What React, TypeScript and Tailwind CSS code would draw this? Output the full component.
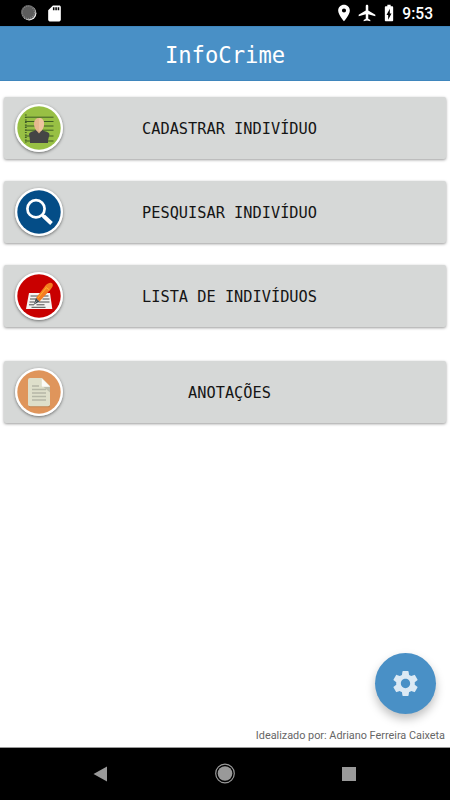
import type { ReactNode } from "react"
import { MdAirplanemodeActive, MdBatteryChargingFull, MdLocationOn, MdSdCard, MdSettings } from "react-icons/md"

interface MenuButtonProps {
  label: string
  color: string
  className?: string
  children: ReactNode
}

function MenuButton({ label, color, className = "", children }: MenuButtonProps) {
  return (
    <button
      className={`flex h-[62px] w-full items-center rounded-[2px] bg-[#d6d8d7] pl-[11px] pr-[50px] shadow-[0_1px_3px_rgba(0,0,0,0.4)] ${className}`}
    >
      <span className="size-12 shrink-0 rounded-full shadow-[0_1px_3px_rgba(0,0,0,0.5)]">
        <svg viewBox="-2.5 -2.5 48 48" className="size-full">
          <circle cx="21.5" cy="21.5" r="24" fill="#fff" />
          <circle cx="21.5" cy="21.5" r="21.7" fill={color} />
          {children}
        </svg>
      </span>
      <span className="flex-1 whitespace-pre pt-0.5 text-center font-['DejaVu_Sans_Mono',monospace] text-[15.3px] leading-5 text-[#151515]">
        {label}
      </span>
    </button>
  )
}

function StatusBar() {
  return (
    <div className="flex h-[26px] items-center bg-black pl-5 pr-[17px] text-white">
      <svg viewBox="0 0 18 18" className="size-[18px]">
        <circle cx="9.2" cy="9.2" r="7.2" fill="#eee" />
        <circle cx="8.3" cy="8.3" r="7.2" fill="#5c5c5c" />
        <circle cx="8.3" cy="8.3" r="6.2" fill="none" stroke="#8d8d8d" strokeWidth="1.2" strokeDasharray="1 1.2" />
      </svg>
      <MdSdCard className="ml-[7px] size-[19px]" />
      <div className="ml-auto flex items-center">
        <MdLocationOn className="size-5" />
        <MdAirplanemodeActive className="ml-[3px] size-5" />
        <MdBatteryChargingFull className="ml-0.5 size-5" />
        <span className="ml-[3px] pt-0.5 font-[Roboto,sans-serif] text-[15.6px] font-medium leading-5">9:53</span>
      </div>
    </div>
  )
}

function PersonIcon() {
  return (
    <>
      <g stroke="#3f5d25" strokeWidth="1">
        <path d="M7.5 10.7H36M7.5 15H36M7.5 19.5H36M7.5 23.7H36M7.5 29.5H36M7.5 34.5H36" />
        <path d="M8.3 8v28" strokeDasharray="1 1.5" strokeWidth="1.8" />
      </g>
      <path d="M12.5 36.5V34l-1-6.500c1-2.500 5-2.500 7.500-4.500h5c2.500 2 7 2 8 4.500L30.500 34v2.500z" fill="#454545" />
      <path d="M18.5 23.500l2-2h2l2 2-3 3.500z" fill="#d9ab82" />
      <path d="M16.500 17c0-3.500 2.300-5.500 5-5.500s5 2 5 5.500c0 4-2 8-5 8s-5-4-5-8z" fill="#e6b88f" />
      <path d="M21.500 11.500c2.700 0 5 2 5 5.500 0 4-2 8-5 8z" fill="#efc49e" />
    </>
  )
}

function SearchIcon() {
  return (
    <>
      <circle cx="18.5" cy="18.3" r="8.6" fill="none" stroke="#fff" strokeWidth="2.7" />
      <path d="M24.5 24.3l2 2" stroke="#fff" strokeWidth="3" />
      <path d="M26 25.5l8 7.500" stroke="#fff" strokeWidth="3.9" />
    </>
  )
}

function ListIcon() {
  return (
    <>
      <path d="M11.5 18.5H32.5l2.300 16H8.500z" fill="#f5f3f1" />
      <path
        d="M13 21.5h8M26 21.5h5M12.5 24.5h7M25 24.5h7M12 27.5h5M21 27.5h11M11.5 30.300h5M19 30.300h8M14 32.800h14"
        stroke="#4b4b4b"
        strokeWidth="1"
      />
      <path d="M18.5 23.5l9.500-12.500c2.500-2.700 5.500-3.500 6.800-2s.2 3.800-1.800 6L22 27z" fill="#f47b20" />
      <path d="M20.5 23.5l8-10M28 12.500l4 3" stroke="#ffb12b" strokeWidth="1" />
      <path d="M18.5 23.5L22 27l-6 3.500z" fill="#3b474d" />
      <path d="M16.5 30l3-4" stroke="#bbb" strokeWidth=".7" />
    </>
  )
}

function NoteIcon() {
  return (
    <>
      <path d="M11.5 36.200h20.500v-18" fill="none" stroke="#b98251" strokeWidth="1" />
      <path d="M12.5 7.500H24.500l8 8V33.800a2 2 0 0 1-2 2H12.500a2 2 0 0 1-2-2V9.500a2 2 0 0 1 2-2z" fill="#dedfca" />
      <path d="M25.5 16h7v6z" fill="#bdbfae" />
      <path d="M24.3 8l8.300 8.300h-7.300a1 1 0 0 1-1-1z" fill="#fbfbf7" />
      <path d="M14.5 15.500h7M14.500 19h14M14.500 22.500h14M14.500 26h14M14.500 29.500h14" stroke="#b5b7a6" strokeWidth="1.3" />
    </>
  )
}

function NavigationBar() {
  return (
    <nav className="flex h-[53px] items-center border-t border-[#999] bg-black pl-[93px] pr-[94px] text-[#999]">
      <svg viewBox="0 0 15 16" className="h-4 w-[15px]" fill="currentColor">
        <path d="M.5 8L14 .5v15z" />
      </svg>
      <svg viewBox="0 0 22 22" className="ml-[106px] size-[22px]">
        <circle cx="11" cy="10.500" r="9.3" fill="none" stroke="currentColor" strokeWidth="1.2" />
        <circle cx="11" cy="10.500" r="7.3" fill="currentColor" />
      </svg>
      <span className="ml-auto size-3.5 bg-[#999]" />
    </nav>
  )
}

export default function App() {
  return (
    <div className="flex h-[800px] w-[450px] flex-col overflow-hidden bg-white">
      <StatusBar />
      <header className="flex h-[55px] items-center justify-center border-y border-[#3f86bd] bg-[#4990c6]">
        <h1 className="pt-0.5 font-['DejaVu_Sans_Mono',monospace] text-[22.2px] leading-7 text-white">InfoCrime</h1>
      </header>
      <main className="flex flex-1 flex-col px-1 pt-4">
        <MenuButton label="CADASTRAR INDIVÍDUO" color="#98c044">
          <PersonIcon />
        </MenuButton>
        <MenuButton label="PESQUISAR INDIVÍDUO" color="#044d87" className="mt-[22px]">
          <SearchIcon />
        </MenuButton>
        <MenuButton label="LISTA DE INDIVÍDUOS" color="#c90000" className="mt-[22px]">
          <ListIcon />
        </MenuButton>
        <MenuButton label="ANOTAÇÕES" color="#df955b" className="mt-[34px]">
          <NoteIcon />
        </MenuButton>
        <div className="mt-auto flex flex-col items-end">
          <button
            aria-label="Configurações"
            className="mr-2.5 flex size-[61px] items-center justify-center rounded-full bg-[#4990c6] shadow-[0_5px_10px_rgba(0,0,0,0.25)]"
          >
            <MdSettings className="size-[31px] text-[#dbe9f4]" />
          </button>
          <p className="mb-[3px] mr-[-3px] mt-3.5 pr-1 font-[Roboto,sans-serif] text-[10.85px] leading-4 text-[#666]">
            Idealizado por: Adriano Ferreira Caixeta
          </p>
        </div>
      </main>
      <NavigationBar />
    </div>
  )
}
